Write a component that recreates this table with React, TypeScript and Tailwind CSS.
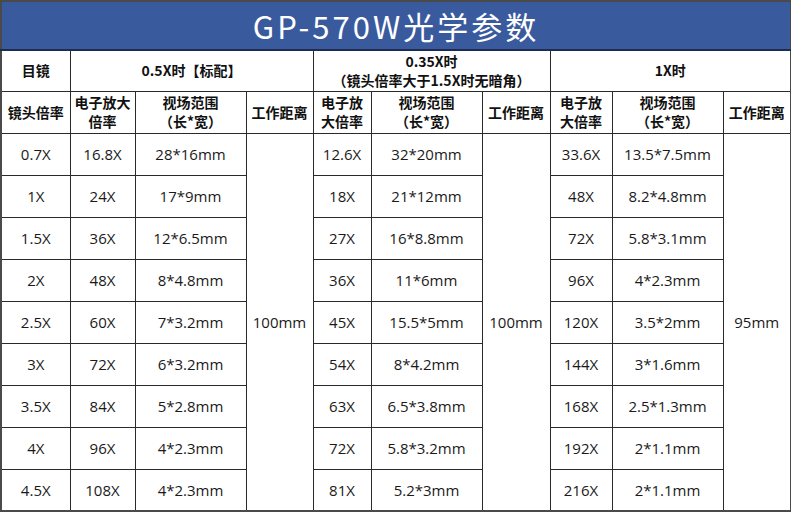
const lens = ["0.7X", "1X", "1.5X", "2X", "2.5X", "3X", "3.5X", "4X", "4.5X"];

const groups = [
  {
    zoom: ["16.8X", "24X", "36X", "48X", "60X", "72X", "84X", "96X", "108X"],
    fov: ["28*16mm", "17*9mm", "12*6.5mm", "8*4.8mm", "7*3.2mm", "6*3.2mm", "5*2.8mm", "4*2.3mm", "4*2.3mm"],
    wd: "100mm",
  },
  {
    zoom: ["12.6X", "18X", "27X", "36X", "45X", "54X", "63X", "72X", "81X"],
    fov: ["32*20mm", "21*12mm", "16*8.8mm", "11*6mm", "15.5*5mm", "8*4.2mm", "6.5*3.8mm", "5.8*3.2mm", "5.2*3mm"],
    wd: "100mm",
  },
  {
    zoom: ["33.6X", "48X", "72X", "96X", "120X", "144X", "168X", "192X", "216X"],
    fov: ["13.5*7.5mm", "8.2*4.8mm", "5.8*3.1mm", "4*2.3mm", "3.5*2mm", "3*1.6mm", "2.5*1.3mm", "2*1.1mm", "2*1.1mm"],
    wd: "95mm",
  },
];

const widths = [69, 65, 111, 67, 58, 111, 68, 62, 111, 68];

const th = "border border-[#2a2a2a] text-center align-middle font-bold text-[14px] leading-[19px] text-[#111] p-0";
const td = "border border-[#2a2a2a] text-center align-middle text-[15px] leading-[18px] text-[#1a1a1a] p-0";

export default function App() {
  return (
    <div className="w-[791px] h-[513px] bg-white overflow-hidden" style={{ fontFamily: '"Open Sans", "Noto Sans CJK SC", sans-serif' }}>
      <table className="table-fixed border-collapse w-[790px] border-2 border-[#4a4a4a]">
        <colgroup>
          {widths.map((w, i) => (
            <col key={i} style={{ width: w }} />
          ))}
        </colgroup>
        <tbody>
          {/* Title */}
          <tr className="h-[49px]">
            <td
              colSpan={10}
              className="bg-[#3a5a9e] border-b-2 border-b-[#1d2d52] text-center text-white text-[31px] tracking-[3px] p-0 leading-none"
              style={{ fontFamily: '"Noto Sans CJK SC", sans-serif' }}
            >
              GP-570W光学参数
            </td>
          </tr>

          {/* Header row 1 */}
          <tr className="h-[41px]" style={{ fontFamily: '"Noto Sans CJK SC", sans-serif' }}>
            <td className={th}>目镜</td>
            <td className={th} colSpan={3}>0.5X时【标配】</td>
            <td className={th + " leading-[18px]"} colSpan={3}>
              0.35X时
              <br />
              （镜头倍率大于1.5X时无暗角）
            </td>
            <td className={th} colSpan={3}>1X时</td>
          </tr>

          {/* Header row 2 */}
          <tr className="h-[42px]" style={{ fontFamily: '"Noto Sans CJK SC", sans-serif' }}>
            <td className={th}>镜头倍率</td>
            <td className={th}>电子放大<br />倍率</td>
            <td className={th}>视场范围<br />（长*宽）</td>
            <td className={th}>工作距离</td>
            <td className={th}>电子放<br />大倍率</td>
            <td className={th}>视场范围<br />（长*宽）</td>
            <td className={th}>工作距离</td>
            <td className={th}>电子放<br />大倍率</td>
            <td className={th}>视场范围<br />（长*宽）</td>
            <td className={th}>工作距离</td>
          </tr>

          {lens.map((l, i) => (
            <tr key={l + i} className="h-[42px]">
              <td className={td}>{l}</td>
              {groups.map((g, gi) => (
                <>
                  <td key={"z" + gi} className={td}>{g.zoom[i]}</td>
                  <td key={"f" + gi} className={td}>{g.fov[i]}</td>
                  {i === 0 && (
                    <td key={"w" + gi} className={td} rowSpan={9}>
                      {g.wd}
                    </td>
                  )}
                </>
              ))}
            </tr>
          ))}
        </tbody>
      </table>
    </div>
  );
}
